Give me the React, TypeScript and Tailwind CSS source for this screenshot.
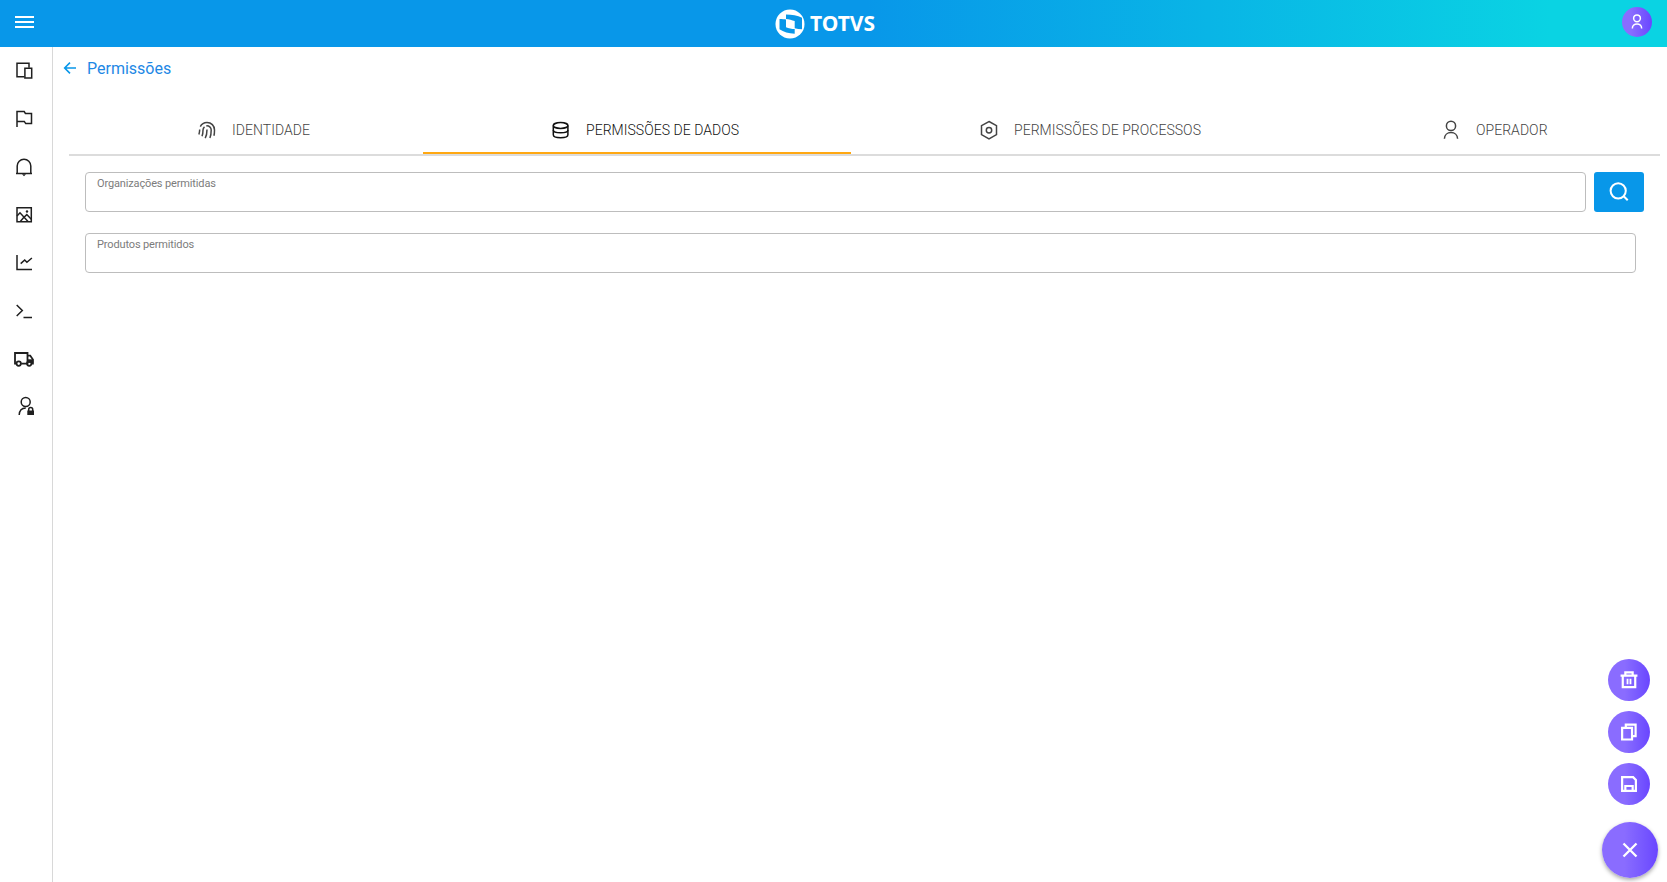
import React from "react";

type IconProps = {
  className?: string;
  strokeWidth?: number;
  children: React.ReactNode;
};

function Icon({ className = "size-6", strokeWidth = 1.5, children }: IconProps) {
  return (
    <svg
      className={`shrink-0 ${className}`}
      viewBox="0 0 24 24"
      fill="none"
      stroke="currentColor"
      strokeWidth={strokeWidth}
    >
      {children}
    </svg>
  );
}

const sideItems = [
  {
    name: "Dispositivos",
    icon: (
      <>
        <path d="M12.5 17.7H5V4.3h12v4.4" />
        <path d="M12.9 9.2h6.8v9.8h-6.8z" />
      </>
    ),
  },
  {
    name: "Bandeiras",
    icon: <path d="M5 20V4.6h7.2l1.2 1.8h6.1v10.2h-5.8l-1.4-2.2H5" />,
  },
  {
    name: "Notificações",
    icon: (
      <>
        <path d="M4 18.6h16M5.2 18.6V11a6.8 6.8 0 0 1 13.6 0v7.6" />
        <path d="M10 19.2h4l-2 2z" fill="currentColor" stroke="none" />
      </>
    ),
  },
  {
    name: "Imagens",
    icon: (
      <>
        <path d="M5 4.7h14.3v14H5z" />
        <path d="M5 13l3-3.2 8 8.7M11.5 14.8l3.3-3.2 4.5 4.7M11.5 14.8l-3 3.5" />
        <circle cx="15" cy="8.5" r="1.2" fill="currentColor" stroke="none" />
      </>
    ),
  },
  {
    name: "Indicadores",
    icon: <path d="M5 4v14.5h15M8.7 12.6l4-3.6 2.2 2.3 5-4.3" />,
  },
  {
    name: "Terminal",
    icon: <path d="M4.7 6l5.6 5.5-5.6 5.5M11.5 18.4h8.5" />,
  },
  {
    name: "Entregas",
    icon: (
      <>
        <g strokeWidth="1.8">
          <path d="M4.2 16.6H3V6h12.5v10.6H9.2" />
          <circle cx="6.7" cy="16.6" r="2.2" />
          <circle cx="17.2" cy="16.6" r="2.2" />
          <path d="M15.5 8.6h2.7l2.7 4v4h-1.2" />
        </g>
        <path d="M16 12.3h5.3v3.6H16z" fill="currentColor" stroke="none" />
      </>
    ),
  },
  {
    name: "Permissões",
    icon: (
      <>
        <circle cx="13.7" cy="7" r="4.5" />
        <path d="M7.2 20c.2-4.2 2.6-6.8 6.6-6.9" />
        <path d="M15.3 15.5H22V20h-6.7z" fill="currentColor" stroke="none" />
        <path d="M16.7 16v-1.5a2 2 0 0 1 4 0V16" />
      </>
    ),
  },
];

const tabs = [
  {
    label: "IDENTIDADE",
    width: "w-[354px]",
    active: false,
    icon: (
      <>
        <path d="M3.9 16.5c.6-1.7.7-3 .8-5M5.3 8.7C6.6 6 9.2 4.5 12 4.5c4.3 0 7.500 3.200 7.500 7.500 0 2 0 4-.6 5.800" />
        <path d="M7 18.2c.9-2 1-3.800 1-6.200a4 4 0 0 1 1.500-3.200M11.300 7.900c2.800-.3 4.900 1.600 4.900 4.100 0 2.700-.2 5.400-1.300 8" />
        <path d="M12 11.5c0 3.300-.3 6-1.800 8.700" />
      </>
    ),
  },
  {
    label: "PERMISSÕES DE DADOS",
    width: "w-[428px]",
    active: true,
    icon: (
      <>
        <ellipse cx="11.6" cy="7.5" rx="7.3" ry="2.9" />
        <path d="M4.3 7.5v9.3c0 1.700 3.200 3 7.300 3s7.300-1.300 7.300-3V7.500" />
        <path d="M4.3 12c0 1.700 3.200 2.800 7.300 2.800s7.300-1.100 7.300-2.800" />
      </>
    ),
  },
  {
    label: "PERMISSÕES DE PROCESSOS",
    width: "w-[462px]",
    active: false,
    icon: (
      <>
        <path d="M12 3.5l7.5 4.2v8.9L12 20.800l-7.500-4.200V7.700z" />
        <circle cx="12" cy="12.2" r="2.7" />
      </>
    ),
  },
  {
    label: "OPERADOR",
    width: "w-[347px]",
    active: false,
    icon: (
      <>
        <circle cx="12" cy="7.9" r="4.6" />
        <path d="M5.4 20.8c.2-3.7 2.9-6.2 6.600-6.200s6.400 2.500 6.600 6.200" />
      </>
    ),
  },
];

const actions = [
  {
    name: "Excluir",
    icon: (
      <>
        <path d="M2.8 7.2h18.4M8 7V3.7h8V7M5.2 7.5v12.3h13.6V7.5" />
        <path d="M10.4 10.500v6M13.600 10.500v6" strokeWidth="2" />
      </>
    ),
  },
  {
    name: "Duplicar",
    icon: (
      <>
        <path d="M4.5 7.5h10.800v12.700H4.500z" />
        <path d="M8.500 7V4h10.700v12.500h-3.400" />
      </>
    ),
  },
  {
    name: "Salvar",
    icon: (
      <>
        <path d="M4.5 4.5h12l3 3v12h-15z" />
        <path d="M8 19.500v-5.300h8v5.300" />
      </>
    ),
  },
];

function Logo() {
  return (
    <div className="mr-[15px] flex items-center">
      <svg className="size-[30px]" viewBox="0 0 30 30">
        <circle cx="15" cy="15" r="14.5" fill="#fff" />
        <g fill="#0897e9">
          <path d="M11 5.5c6 0 11.5 1 16 3.200v11.500c-2.500 0-5-.3-7.300-.9v-7.300C17 11 14 10.200 11 9.900z" />
          <path d="M4.500 10c3 0 4.500.2 6.500.6v7.600c2.700 1 5.700 1.700 8.700 1.900v4.600c-6-.2-11.200-1.700-15.200-4.400z" />
        </g>
      </svg>
      <svg className="ml-[5px] h-[30px] w-[66px] overflow-visible" viewBox="0 0 66 30">
        <text
          x="0"
          y="22.4"
          fill="#fff"
          fontFamily="'Noto Sans', sans-serif"
          fontSize="22"
          fontWeight="700"
          textLength="65"
          lengthAdjust="spacingAndGlyphs"
        >
          TOTVS
        </text>
      </svg>
    </div>
  );
}

function Header() {
  return (
    <header className="grid h-[47px] shrink-0 grid-cols-3 items-center bg-linear-to-r/srgb from-[#0897e9] from-52% to-[#0ad3e3] to-93%">
      <button className="-mt-[3px] ml-[15px] flex w-[19px] flex-col gap-[3px]" aria-label="Menu">
        <span className="h-[2px] bg-white" />
        <span className="h-[2px] bg-white" />
        <span className="h-[2px] bg-white" />
      </button>
      <div className="flex items-center justify-center">
        <Logo />
      </div>
      <button
        className="-mt-[3px] mr-[15px] flex size-[30px] items-center justify-center justify-self-end rounded-full bg-linear-to-r from-[#8a6cff] from-30% to-[#6a45ff] text-white"
        aria-label="Perfil"
      >
        <Icon className="size-[18px]" strokeWidth={2}>
          <circle cx="12" cy="7" r="4.5" />
          <path d="M5.8 20.5c0-3.500 2.700-6 6.200-6s6.200 2.500 6.200 6" />
        </Icon>
      </button>
    </header>
  );
}

function Sidebar() {
  return (
    <nav className="flex w-[53px] shrink-0 flex-col border-r border-[#d8d8d8] text-[#1f1f1f]">
      {sideItems.map((item) => (
        <button key={item.name} className="flex h-12 items-center pl-3" aria-label={item.name}>
          <Icon>{item.icon}</Icon>
        </button>
      ))}
    </nav>
  );
}

function Field({ label, className }: { label: string; className: string }) {
  return (
    <div className={`h-10 rounded border border-[#bdbdbd] pt-[4px] pl-[11px] ${className}`}>
      <span className="block text-[11px] leading-[13px] tracking-[-0.14px] text-[#7c7c7c]">{label}</span>
    </div>
  );
}

export default function App() {
  return (
    <div className="flex h-[882px] w-[1667px] flex-col overflow-hidden bg-white font-['Roboto',sans-serif]">
      <Header />
      <div className="flex flex-1">
        <Sidebar />
        <main className="flex-1">
          <a className="flex h-[42px] items-center gap-[9px] pl-[9px] text-[#1e88e5]">
            <Icon className="size-4 text-[#0897e9]" strokeWidth={2.4}>
              <path d="M21 12H4M12 4l-8 8 8 8" />
            </Icon>
            <span className="pt-[2px] text-[16px]">Permissões</span>
          </a>

          <div className="mt-[16px] ml-4 flex h-[51px] w-[1591px] border-b-2 border-[#dcdcdc]">
            {tabs.map((tab) => (
              <button
                key={tab.label}
                className={`flex items-center pl-[126px] ${tab.width} ${
                  tab.active
                    ? "border-b-2 border-[#ffa812] pt-[2px] text-[#111]"
                    : "text-[#444]"
                }`}
              >
                <Icon>{tab.icon}</Icon>
                <span className="ml-[13px] pt-[2px] text-[14px] font-light tracking-[0.04px] whitespace-nowrap">
                  {tab.label}
                </span>
              </button>
            ))}
          </div>

          <div className="mt-4 ml-8 flex gap-2">
            <Field label="Organizações permitidas" className="w-[1501px]" />
            <button
              className="flex h-10 w-[50px] items-center justify-center rounded-[3px] bg-[#0897e9] text-white"
              aria-label="Pesquisar"
            >
              <Icon strokeWidth={2}>
                <circle cx="11.2" cy="10.8" r="7.6" />
                <path d="M16.7 16.2l4 4" />
              </Icon>
            </button>
          </div>
          <div className="mt-[21px] ml-8">
            <Field label="Produtos permitidos" className="w-[1551px]" />
          </div>
        </main>
      </div>

      {/* Floating actions */}
      <div className="fixed top-[659px] left-[1602px] flex w-14 flex-col items-center gap-[10px]">
        {actions.map((action) => (
          <button
            key={action.name}
            className="mr-[2px] flex size-[42px] items-center justify-center rounded-full bg-linear-to-r from-[#8a6cff] from-40% to-[#6a45ff] text-white"
            aria-label={action.name}
          >
            <Icon className="size-[22px]" strokeWidth={2.4}>
              {action.icon}
            </Icon>
          </button>
        ))}
        <button
          className="mt-[7px] flex size-14 items-center justify-center rounded-full bg-linear-to-r from-[#8a6cff] from-40% to-[#6a45ff] text-white shadow-[0_2px_4px_rgba(0,0,0,0.35)]"
          aria-label="Fechar"
        >
          <Icon strokeWidth={2.3}>
            <path d="M5.5 5.5l13 13M18.5 5.5l-13 13" />
          </Icon>
        </button>
      </div>
    </div>
  );
}
